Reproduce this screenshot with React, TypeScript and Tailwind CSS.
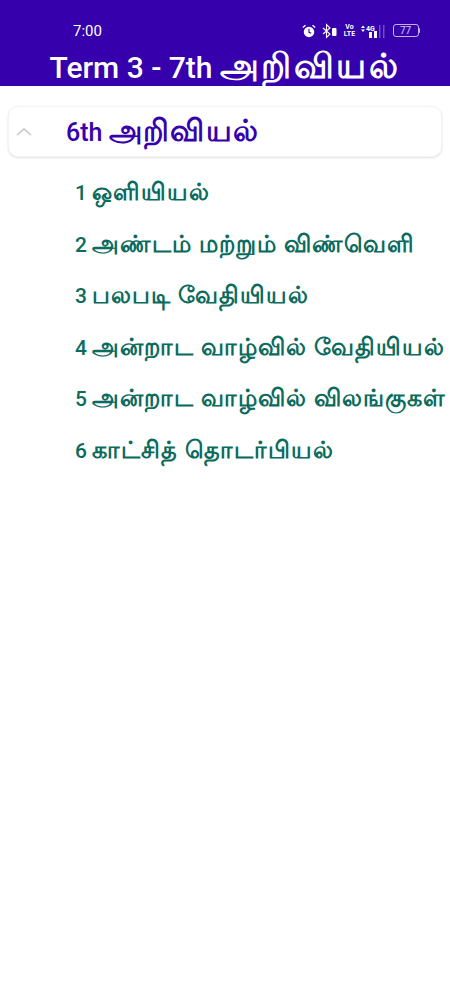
const lessons = [
  ["1", "ஒளியியல்"],
  ["2", "அண்டம் மற்றும் விண்வெளி"],
  ["3", "பலபடி வேதியியல்"],
  ["4", "அன்றாட வாழ்வில் வேதியியல்"],
  ["5", "அன்றாட வாழ்வில் விலங்குகள்"],
  ["6", "காட்சித் தொடர்பியல்"],
];

function StatusIcons() {
  return (
    <div className="flex items-center text-white">
      {/* alarm */}
      <svg width="14" height="14" viewBox="0 0 16 16" className="mr-[6px]">
        <circle cx="8" cy="9" r="6" fill="white" />
        <path d="M8 5.5V9.5L10.5 10.5" stroke="#3600ad" strokeWidth="1.3" fill="none" />
        <path d="M1 4L4 1.5M15 4L12 1.5" stroke="white" strokeWidth="1.6" />
      </svg>
      {/* bluetooth + small battery */}
      <svg width="15" height="16" viewBox="0 0 15 16" className="mr-[8px]">
        <path d="M1 5L8 11L4.5 14.5V1.5L8 5L1 11" stroke="white" strokeWidth="1.1" fill="none" />
        <rect x="10" y="5" width="4.5" height="8" rx="1" fill="white" />
      </svg>
      {/* volte */}
      <div className="mr-[6px] flex w-[10px] flex-col items-center text-[7px] font-bold leading-[7px]">
        <span>Vo</span>
        <span>LTE</span>
      </div>
      {/* 4G signal */}
      <svg width="25" height="16" viewBox="0 0 25 16" className="mr-[7px]">
        <path d="M0 5L2 2.5L4 5ZM0 6.5L2 9L4 6.5Z" fill="white" />
        <text x="5" y="7.5" fontSize="7" fontWeight="700" fill="white">4G</text>
        <rect x="8" y="9" width="3" height="6" fill="white" />
        <rect x="13" y="8" width="3" height="7" fill="white" />
        <rect x="18" y="2" width="1.5" height="13" fill="white" opacity="0.3" />
        <rect x="22" y="2" width="1.5" height="13" fill="white" opacity="0.3" />
      </svg>
      {/* battery */}
      <div className="flex items-center">
        <div className="flex h-[13px] w-[26px] items-center justify-center rounded-[3px] border border-white/70 text-[10px] leading-none text-white/80">
          77
        </div>
        <div className="h-[5px] w-[1.5px] rounded-r bg-white/70" />
      </div>
    </div>
  );
}

export default function App() {
  return (
    <div className="min-h-screen bg-white font-['Roboto','Noto_Sans',sans-serif]">
      <div className="h-[86px] overflow-hidden bg-[#3600ad] text-white">
        <div className="flex h-[48px] items-center justify-between pt-[13px] pl-[73px] pr-[30px]">
          <span className="text-[15px] leading-[20px]">7:00</span>
          <StatusIcons />
        </div>
        <h1 className="whitespace-nowrap text-center text-[30px] font-medium leading-[38px]">
          Term 3 - 7th <span className="text-[35px] font-bold tracking-[2.5px]">அறிவியல்</span>
        </h1>
      </div>

      <div className="mx-[8px] mt-[20px] flex h-[51px] items-center rounded-[10px] border border-gray-100 bg-white pl-[7px] shadow">
        <svg width="16" height="10" viewBox="0 0 16 10" className="mr-[34px]">
          <path d="M1 8L8 2L15 8" stroke="#c4c4c4" strokeWidth="1.5" fill="none" />
        </svg>
        <div className="whitespace-nowrap text-[25px] font-medium leading-[36px] text-[#3600ad]">
          6th <span className="text-[30px] font-bold tracking-[1.3px]">அறிவியல்</span>
        </div>
      </div>

      <div className="mt-[10px] pl-[75px]">
        {lessons.map(([n, t]) => (
          <div key={n} className="h-[51.5px] whitespace-nowrap text-[21px] font-medium leading-[51.5px] text-[#0b6b5d]">
            {n} <span className="text-[24px] font-bold tracking-[1px]">{t}</span>
          </div>
        ))}
      </div>
    </div>
  );
}
